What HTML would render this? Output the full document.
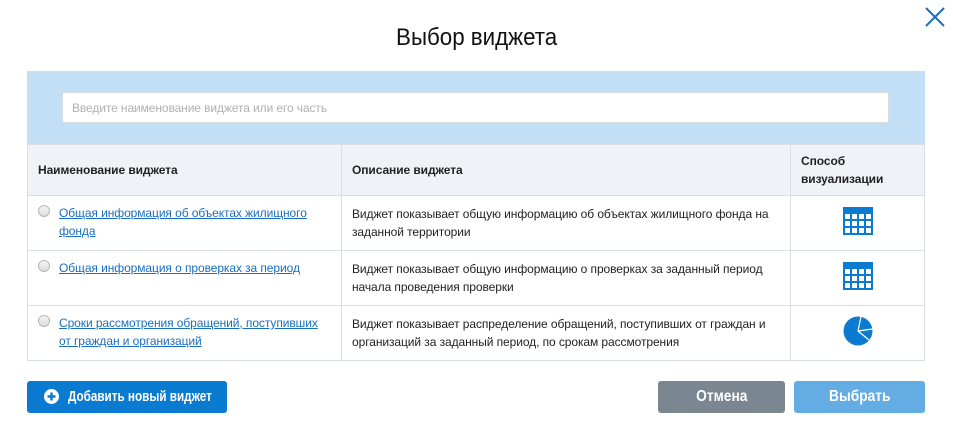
<!DOCTYPE html>
<html><head><meta charset="utf-8"><style>
*{margin:0;padding:0;box-sizing:border-box}
body{width:953px;height:431px;background:#fff;font-family:"Liberation Sans",Arial,sans-serif;position:relative;overflow:hidden;color:#222}
.abs{position:absolute}
h1{position:absolute;left:0;width:953px;top:24px;text-align:center;font-size:24px;font-weight:normal;color:#111}
h1 span{display:inline-block;transform:scaleX(0.93)}
.band{left:27px;top:71px;width:898px;height:74px;background:#c2dff6}
.inp{left:62px;top:92px;width:827px;height:31px;background:#fff;border:1px solid #d8dde2;border-radius:2px;font-size:12px;color:#b0b0b0;padding:8px 9px;letter-spacing:-0.1px}
table{position:absolute;left:27px;top:144px;width:898px;border-collapse:collapse;font-size:12px;letter-spacing:-0.08px}
td,th{border:1px solid #d9dee3;vertical-align:middle}
th{background:#eff3f7;text-align:left;font-weight:bold;height:51px;padding:0 10px;line-height:18px}
td{height:55px;padding:0 10px;line-height:18px}
a{color:#1a6fbd;text-decoration:underline}
.rad{display:inline-block;width:12px;height:12px;border-radius:50%;border:1px solid #b8b8b8;background:linear-gradient(#f4f4f4,#ddd);position:absolute;left:10px;top:9px}
.c1{position:relative;padding-left:31px;vertical-align:top;padding-top:8px}
.btn{position:absolute;top:381px;height:32px;border-radius:3px;color:#fff;font-weight:bold;font-size:15px;text-align:center;line-height:32px;white-space:nowrap}
.btn span{display:inline-block;transform:scaleX(0.78)}
.btn span.w{transform:scaleX(0.86);font-size:16px}
</style></head><body>
<h1><span>Выбор виджета</span></h1>
<svg class="abs" style="left:924px;top:6px" width="22" height="22" viewBox="0 0 22 22"><path d="M2 2L20 20M20 2L2 20" stroke="#1a6fbd" stroke-width="2"/></svg>
<div class="abs band"></div>
<div class="abs inp">Введите наименование виджета или его часть</div>
<table>
<tr><th style="width:314px">Наименование виджета</th><th style="width:449px">Описание виджета</th><th>Способ<br>визуализации</th></tr>
<tr><td class="c1"><span class="rad"></span><a>Общая информация об объектах жилищного фонда</a></td><td>Виджет показывает общую информацию об объектах жилищного фонда на заданной территории</td><td style="text-align:center"><svg width="30" height="28" viewBox="0 0 30 28"><rect width="30" height="28" fill="#0b7ad1"/><g fill="#fff"><rect x="2" y="7" width="5" height="5"/><rect x="9" y="7" width="5" height="5"/><rect x="16" y="7" width="5" height="5"/><rect x="23" y="7" width="5" height="5"/><rect x="2" y="14" width="5" height="5"/><rect x="9" y="14" width="5" height="5"/><rect x="16" y="14" width="5" height="5"/><rect x="23" y="14" width="5" height="5"/><rect x="2" y="21" width="5" height="5"/><rect x="9" y="21" width="5" height="5"/><rect x="16" y="21" width="5" height="5"/><rect x="23" y="21" width="5" height="5"/></g></svg></td></tr>
<tr><td class="c1"><span class="rad"></span><a>Общая информация о проверках за период</a></td><td>Виджет показывает общую информацию о проверках за заданный период начала проведения проверки</td><td style="text-align:center"><svg width="30" height="28" viewBox="0 0 30 28"><rect width="30" height="28" fill="#0b7ad1"/><g fill="#fff"><rect x="2" y="7" width="5" height="5"/><rect x="9" y="7" width="5" height="5"/><rect x="16" y="7" width="5" height="5"/><rect x="23" y="7" width="5" height="5"/><rect x="2" y="14" width="5" height="5"/><rect x="9" y="14" width="5" height="5"/><rect x="16" y="14" width="5" height="5"/><rect x="23" y="14" width="5" height="5"/><rect x="2" y="21" width="5" height="5"/><rect x="9" y="21" width="5" height="5"/><rect x="16" y="21" width="5" height="5"/><rect x="23" y="21" width="5" height="5"/></g></svg></td></tr>
<tr><td class="c1"><span class="rad"></span><a>Сроки рассмотрения обращений, поступивших от граждан и организаций</a></td><td>Виджет показывает распределение обращений, поступивших от граждан и организаций за заданный период, по срокам рассмотрения</td><td style="text-align:center"><svg width="30" height="30" viewBox="0 0 30 30"><circle cx="15" cy="15" r="14.5" fill="#0b7ad1"/><path d="M15 15L18 0.6M15 15L29.5 13M15 15L26 24" stroke="#fff" stroke-width="1.2"/></svg></td></tr>
</table>
<div class="btn" style="left:27px;width:200px;background:#0b7ad1"><svg class="abs" style="left:17px;top:8px" width="15" height="15" viewBox="0 0 15 15"><circle cx="7.5" cy="7.5" r="7.5" fill="#fff"/><path d="M7.5 3.5v8M3.5 7.5h8" stroke="#0b7ad1" stroke-width="2.4"/></svg><span style="position:absolute;left:41px;top:0;transform-origin:left center">Добавить новый виджет</span></div>
<div class="btn" style="left:658px;width:127px;background:#7a8791"><span class="w">Отмена</span></div>
<div class="btn" style="left:794px;width:131px;background:#63ace4"><span class="w">Выбрать</span></div>
</body></html>
